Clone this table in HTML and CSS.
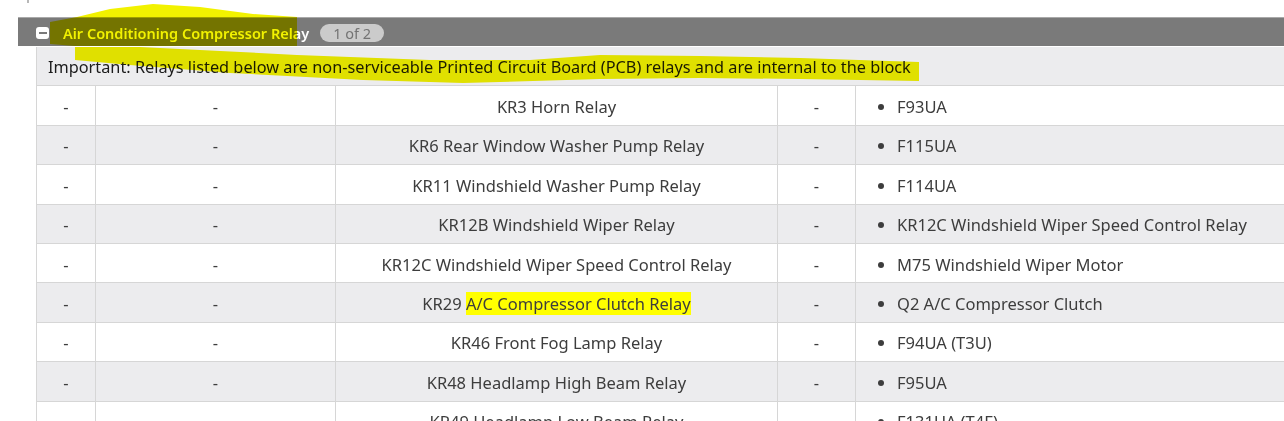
FILE: index.html
```html
<!DOCTYPE html>
<html>
<head>
<meta charset="utf-8">
<link rel="stylesheet" href="styles.css">
</head>
<body>
<div class="page">
  <span class="corner-mark"></span>
  <section class="section">
    <div class="section-head">
      <span class="toggle"><span class="toggle-bar"></span></span>
      <span class="section-title">Air Conditioning Compressor Relay</span>
      <span class="badge">1 of 2</span>
    </div>
    <table class="relays">
      <colgroup>
        <col class="c1"><col class="c2"><col class="c3"><col class="c4"><col class="c5">
      </colgroup>
      <tr class="note"><td colspan="5">Important: Relays listed below are non-serviceable Printed Circuit Board (PCB) relays and are internal to the block</td></tr>
      <tr><td>-</td><td>-</td><td>KR3 Horn Relay</td><td>-</td><td><ul><li>F93UA</li></ul></td></tr>
      <tr class="alt"><td>-</td><td>-</td><td>KR6 Rear Window Washer Pump Relay</td><td>-</td><td><ul><li>F115UA</li></ul></td></tr>
      <tr><td>-</td><td>-</td><td>KR11 Windshield Washer Pump Relay</td><td>-</td><td><ul><li>F114UA</li></ul></td></tr>
      <tr class="alt"><td>-</td><td>-</td><td>KR12B Windshield Wiper Relay</td><td>-</td><td><ul><li>KR12C Windshield Wiper Speed Control Relay</li></ul></td></tr>
      <tr><td>-</td><td>-</td><td>KR12C Windshield Wiper Speed Control Relay</td><td>-</td><td><ul><li>M75 Windshield Wiper Motor</li></ul></td></tr>
      <tr class="alt"><td>-</td><td>-</td><td>KR29 <span class="hl">A/C Compressor Clutch Relay</span></td><td>-</td><td><ul><li>Q2 A/C Compressor Clutch</li></ul></td></tr>
      <tr><td>-</td><td>-</td><td>KR46 Front Fog Lamp Relay</td><td>-</td><td><ul><li>F94UA (T3U)</li></ul></td></tr>
      <tr class="alt"><td>-</td><td>-</td><td>KR48 Headlamp High Beam Relay</td><td>-</td><td><ul><li>F95UA</li></ul></td></tr>
      <tr><td>-</td><td>-</td><td>KR49 Headlamp Low Beam Relay</td><td>-</td><td><ul><li>F131UA (T4F)</li></ul></td></tr>
    </table>
  </section>
  <svg class="marker" width="1284" height="421" viewBox="0 0 1284 421">
    <path d="M50 22 L77 17 L110 9 L153 4 L200 7 L253 14 L297 17 L297 46 L75 46 L50 44 Z"/>
    <path d="M75 47 L140 47 L220 51 L297 55 L430 60 L530 60 L600 55 L700 56 L800 58 L919 62 L919 81 L800 79 L700 78 L600 79 L500 82 L463 83 L363 80 L230 73 L130 65 L75 60 Z"/>
  </svg>
</div>
</body>
</html>
```

FILE: styles.css
```css
html, body {
  margin: 0;
  padding: 0;
  overflow: hidden;
  background: #ffffff;
}

.page {
  position: relative;
  width: 1284px;
  height: 421px;
  overflow: hidden;
  font-family: "Noto Sans", "Open Sans", sans-serif;
}

.corner-mark {
  position: absolute;
  left: 27px;
  top: 0;
  width: 2px;
  height: 3px;
  background: #b8b8b8;
}

.section {
  padding-top: 17px;
  padding-left: 18px;
}

.section-head {
  display: flex;
  align-items: center;
  height: 28px;
  border-top: 1px solid #a9a9a9;
  background: #7a7a7a;
  padding-left: 18px;
  width: 1300px;
}

.toggle {
  display: flex;
  align-items: center;
  justify-content: center;
  width: 13px;
  height: 12px;
  margin-top: 1px;
  background: #ffffff;
  border-radius: 3px;
}

.toggle-bar {
  display: block;
  width: 8px;
  height: 2px;
  background: #7a7a7a;
}

.section-title {
  margin-left: 14px;
  margin-top: 2px;
  color: #ffffff;
  font-size: 14.5px;
  font-weight: 600;
}

.badge {
  margin-left: 11px;
  margin-top: 2px;
  height: 18px;
  line-height: 18px;
  padding: 0 13px;
  border-radius: 9px;
  background: #cbcbcb;
  color: #737373;
  font-size: 14.5px;
}

.relays {
  margin-top: 1px;
  margin-left: 18px;
  width: 1280px;
  border-collapse: collapse;
  table-layout: fixed;
  color: #3d3d3d;
  font-size: 16.5px;
}

.c1 { width: 59px; }
.c2 { width: 240px; }
.c3 { width: 442px; }
.c4 { width: 78px; }
.c5 { width: 461px; }

.relays td {
  border: 1px solid #d6d6d6;
  text-align: center;
  padding: 2px 0 0 0;
  height: 36.4px;
  vertical-align: middle;
}

.relays tr.alt td {
  background: #ececee;
}

.relays tr.note td {
  background: #ececee;
  text-align: left;
  padding-left: 11px;
  color: #1c1c1c;
  font-size: 16.3px;
  border-top: none;
}

.relays td:last-child {
  text-align: left;
}

.relays ul {
  margin: 0;
  padding-left: 41px;
}

.hl {
  background: #ffff00;
}

.marker {
  position: absolute;
  left: 0;
  top: 0;
  mix-blend-mode: multiply;
  fill: #f2f200;
  pointer-events: none;
}
```
